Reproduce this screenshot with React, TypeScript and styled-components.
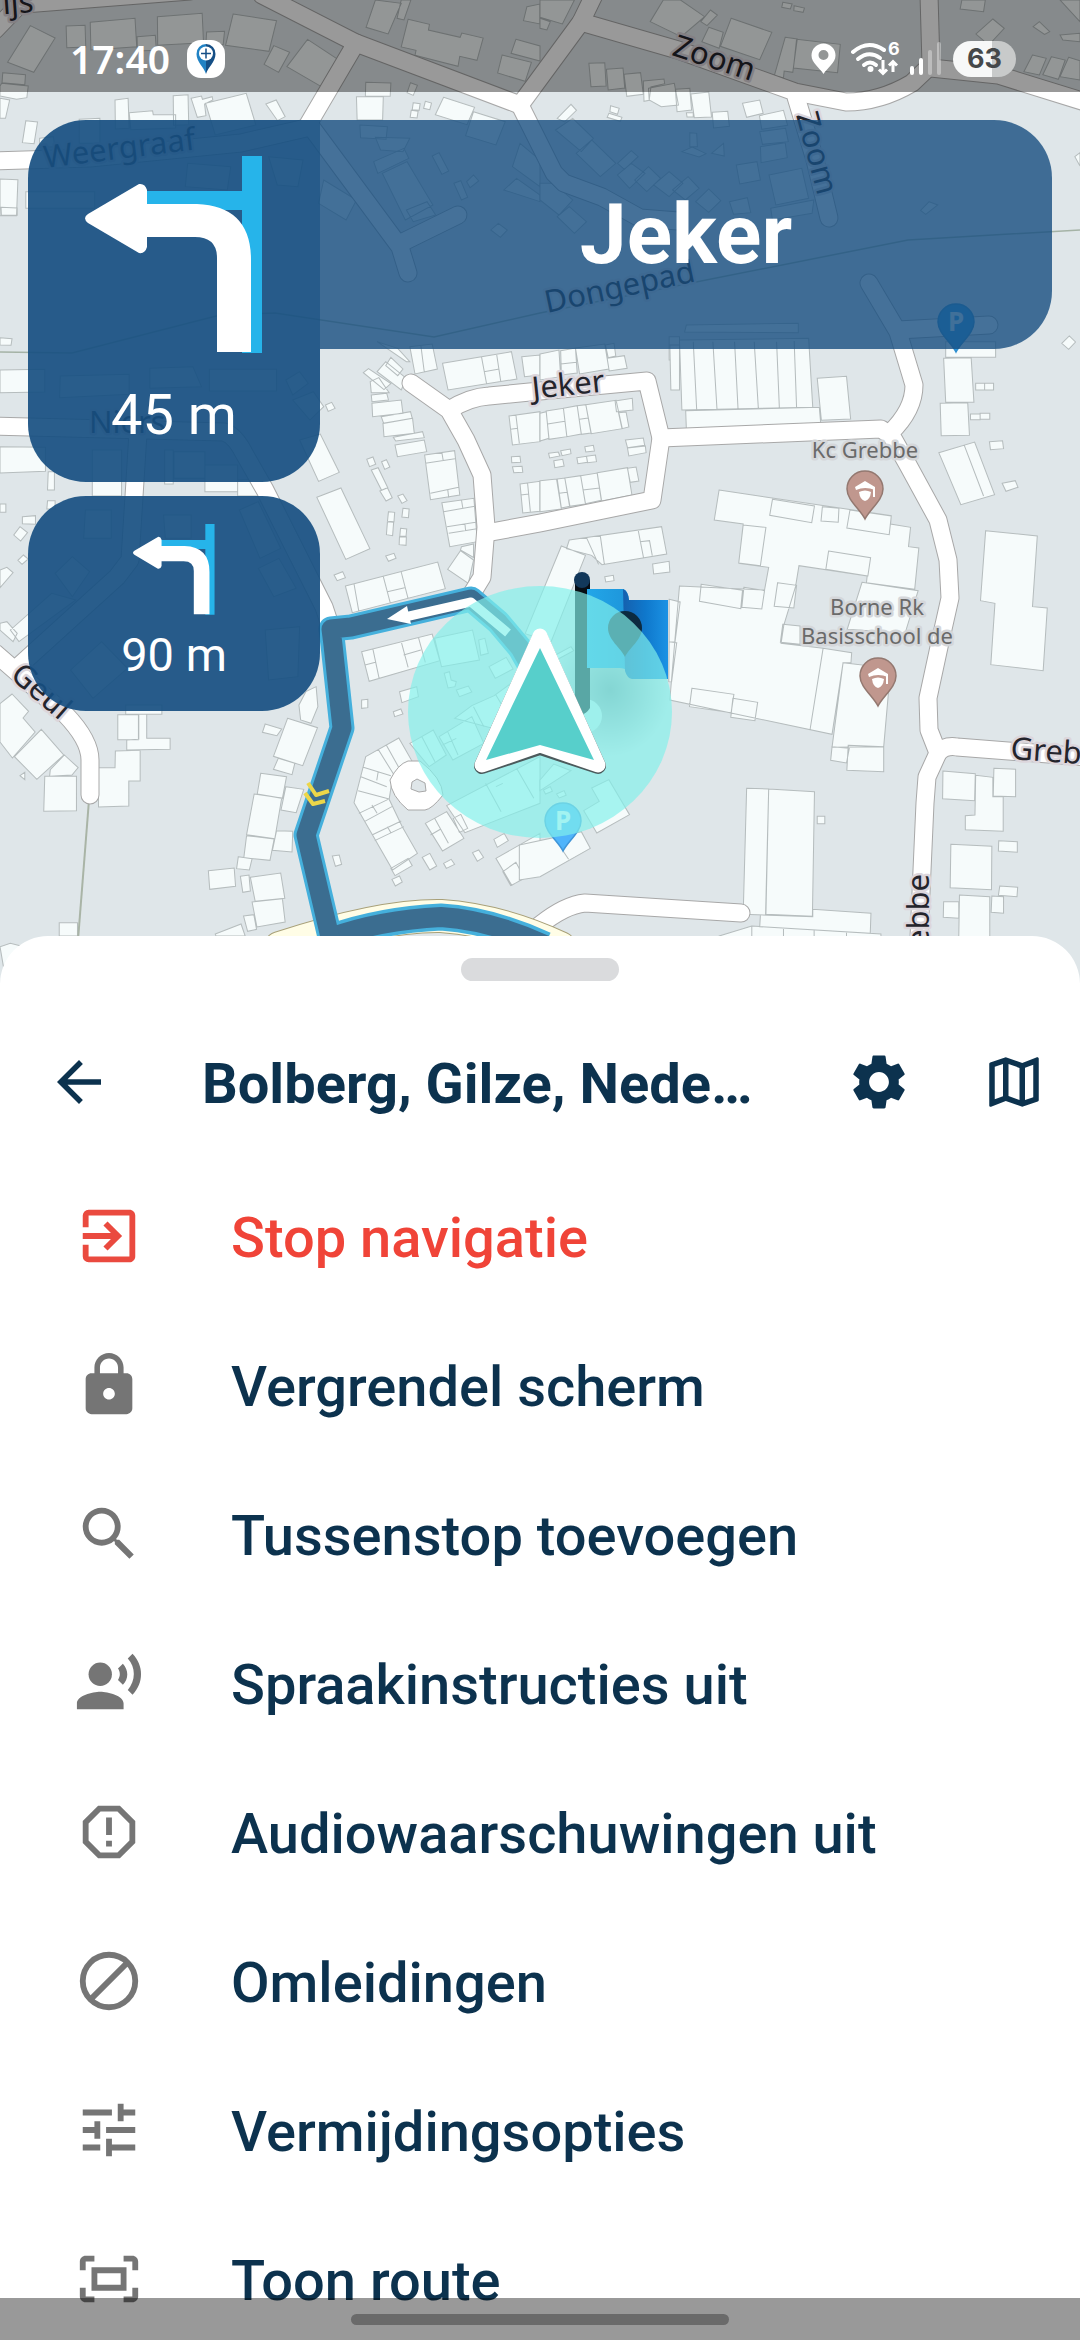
import React, {ReactNode} from 'react';
import styled, {createGlobalStyle} from 'styled-components';
import {
    MdArrowBack,
    MdExitToApp,
    MdLock,
    MdOutlineMap,
    MdRecordVoiceOver,
    MdReportGmailerrorred,
    MdSearch,
    MdSettings,
    MdTune
} from 'react-icons/md';

const GlobalStyle = createGlobalStyle`
    * { box-sizing: border-box; }
    body {
        margin: 0;
        background: #fff;
        font-family: Roboto, "Liberation Sans", sans-serif;
    }
    button {
        margin: 0;
        padding: 0;
        border: 0;
        background: none;
        font: inherit;
        color: inherit;
    }`;

const Screen = styled.div`
    position: relative;
    display: flex;
    flex-direction: column;
    height: 100vh;
    overflow: hidden;`;

const MapSvg = styled.svg`
    position: absolute;
    top: 0;
    left: 0;
    width: 100%;
    height: 42%;
    background: #dfe6e9;`;

const StatusBar = styled.header`
    position: relative;
    display: flex;
    align-items: center;
    justify-content: space-between;
    height: 92px;
    padding: 26px 64px 0 70px;
    background: rgba(0, 0, 0, 0.4);
    color: #fff;`;

const StatusGroup = styled.div<{ $gap: number }>`
    display: flex;
    align-items: center;
    gap: ${p => p.$gap}px;
    height: 40px;`;

const Clock = styled.span`
    font: 600 39px/40px "Noto Sans", sans-serif;`;

const Battery = styled.span`
    display: flex;
    align-items: center;
    justify-content: center;
    width: 63px;
    height: 36px;
    border-radius: 18px;
    background: linear-gradient(90deg, #f7f8f8 62%, #c8caca 62%);
    color: #45484a;
    font: 700 27px/36px Inter, sans-serif;`;

const Guidance = styled.main`
    position: relative;
    flex: 1;
    display: flex;
    align-items: flex-start;
    padding: 28px 28px 0;`;

const TurnColumn = styled.div`
    display: flex;
    flex-direction: column;
    gap: 14px;
    width: 292px;`;

const TurnCard = styled.section<{ $next?: boolean }>`
    display: flex;
    flex-direction: column;
    align-items: center;
    height: ${p => p.$next ? 215 : 362}px;
    padding-top: ${p => p.$next ? 28 : 36}px;
    gap: ${p => p.$next ? 12 : 26}px;
    border-radius: ${p => p.$next ? '58px' : '58px 0 58px 58px'};
    background: rgba(23, 79, 129, 0.92);
    color: #fff;
    font-size: ${p => p.$next ? 47 : 56}px;
    line-height: ${p => p.$next ? 56 : 72}px;`;

const TurnSvg = styled.svg<{ $width: number }>`
    display: block;
    width: ${p => p.$width}px;`;

const StreetBanner = styled.h1`
    flex: 1;
    margin: 0;
    border-radius: 0 58px 58px 0;
    background: rgba(22, 77, 127, 0.8);
    color: #fff;
    font-size: 84px;
    font-weight: 700;
    line-height: 229px;
    text-align: center;`;

const Sheet = styled.section`
    position: relative;
    flex: 0 0 60%;
    overflow: hidden;
    border-radius: 48px 48px 0 0;
    background: #fff;
    color: #0c324e;`;

const Grabber = styled.div`
    width: 158px;
    height: 23px;
    margin: 22px auto 27px;
    border-radius: 12px;
    background: #dadbdd;`;

const SheetHeader = styled.div`
    display: flex;
    align-items: center;
    height: 148px;
    padding: 0 33px 0 46px;`;

const IconButton = styled.button`
    display: flex;
    flex: none;
    font-size: 66px;

    & + & { margin-left: 69px; }`;

const Title = styled.h2`
    flex: 1;
    min-width: 0;
    margin: 0 60px 0 90px;
    padding-top: 4px;
    overflow: hidden;
    font-size: 56px;
    font-weight: 700;
    line-height: 72px;
    white-space: nowrap;
    text-overflow: ellipsis;`;

const Menu = styled.ul`
    margin: 0;
    padding: 5px 0 0;
    list-style: none;`;

const MenuButton = styled.button<{ $danger?: boolean }>`
    display: flex;
    align-items: center;
    gap: 87px;
    width: 100%;
    height: 149px;
    padding-left: 74px;
    color: ${p => p.$danger ? '#f04438' : '#0c324e'};
    text-align: left;

    svg {
        flex: none;
        width: 70px;
        height: 70px;
        color: ${p => p.$danger ? '#ea4a3f' : '#757575'};
    }`;

const MenuLabel = styled.span`
    padding-top: 4px;
    font-size: 56px;
    font-weight: 500;
    line-height: 66px;`;

const SystemNav = styled.div`
    position: absolute;
    right: 0;
    bottom: 0;
    left: 0;
    height: 42px;
    padding-top: 16px;
    background: rgba(0, 0, 0, 0.4);`;

const NavPill = styled.div`
    width: 35%;
    height: 11px;
    margin: 0 auto;
    border-radius: 6px;
    background: #6a6a6a;`;

// Building outlines, grouped in tiles that each have their own origin.
const TILES = [
    {
        x: 0, y: 0, d: `M88 77l72 37-62 103-76-30z M192 78l55-2 2 65-55 2z M262 67l130-12 5 85-133 10z M398 110l53-4 3 45-55 2z
        M457 50l130-10 4 88-133 8z M600 96l52-2-4 40-50-2z M677 42l126 20-22 92-126-18z M893 118l88 60-48 82-100-60z
        M795 137l46 20-32 60-42-24z M1090 0l75 10-38 92-64-20z M1165 0l28 0-20 60-20-5z
        M1185 58l62 15-3 17 92 22 5-13 62 15-18 67-50-12-5 30-125-33 3-15-43-10z M1498 118l70 20v45l-84-23z
        M1458 165l85 22-18 57-80-25z M1530 20l38-8v60l-48-10z M8 218l66 6-2 30-66-6z M5 250l77 8-4 35-30 5-48-10v-30z
        M0 295l28 5-12 55-16 0z M334 300l38-5 3 90-40 2z M503 287l43-3 2 90-44 2z M375 338l68-6 2 12 65 0v40l-130 5z
        M555 295l30-7 3 10 28-8 2 10-24 12 4 35-25 5z M597 310l118-30 28 95-118 30z M772 312l30-12 26 50-22 12z
        M75 362l34 4-10 65-34-3z M230 358l60-3v75h-60z M115 415l40-5 4 30-44 2z M1062 247l73 2-2 40-72-1z M1035 290l78 0-2 70-74 0z
        M1192 248l20 8-12 30-18-8z M1200 308l20 3-3 20-20-2z M1194 331l20 3-3 20-20-2z M1235 304l18 5-5 20-18-4z
        M1288 292l90 30-22 52-92-30z M1375 335l92 30-27 70-88-28z M1045 375l80 5-4 38-74-5z M1090 412l100 3-20 40-65-5z
        M1085 485l88-40 14 30-90 45z M1110 520l72-35 75 130-80 45z M1180 630l60-25 25 40-65 20z M1255 468l20-10 28 55-20 10z
        M1318 550l20-8 20 50-18 8z M1355 545l20-20 15 18-25 20z M1425 690l22-20 26 20-20 22z M0 537l52 2-4 108h-48z M3 622l47 2v22h-46z
        M75 575h200v50h-200z M545 490l125 10-10 70-122-10z M780 470l100 10-15 80-60-5z M940 540l95 60-30 60-80-50z
        M0 1013l35 3-3 20-32-1z M1510 430l58 50v80l-80-60z M1500 535l68 50v20l-105-35z`
    },
    {
        x: 540, y: 0, d: `M0 0h100l-35 72-65-20z M0 55l30 10-10 25-20-5z M358 0h50l70 50-68 60-90-45z M495 30l20 15-30 32-18-12z
        M490 82l42 15-12 48-50-20z M555 55l118 42-35 82-114-40z M705 7l27 5-5 15-25-5z M738 17l30 7-4 13-27-5z
        M712 112l35 5-13 100-25-4-2 20-27-5z M745 118l127 15-8 85-128-14z M142 190l46-2 4 70-44 2z M193 208l48-4 5 60-48 6z
        M244 223l48-5 8 65-48 6z M300 243l60-6 2 14-40 10-5 40-15 3z M315 265l75-15 12 65-50 5-35-20z M393 268l42-3 5 65-42 5z
        M438 282l52-6 8 75-50 2z M425 338l20 0v13h-18z M500 337l45-3 5 45-46 5z M588 310l50-10 10 40-48 12z
        M637 347l70-16 12 45-75 12z M638 395l75-10 8 40-75 8z M640 440l72-12 6 45-76 15z M205 317l25 8-5 18-22-8z
        M200 340l38 12-5 12-38-12z M50 355l40-42 16 18-35 35z M45 390l50-35 60 60-35 40z M105 460l45-40 70 70-45 40z
        M225 490l40-38 20 18-40 38z M225 525l40-35 40 30-45 45z M275 540l40-40 35 35-40 40z M330 555l45-40 40 35-40 40z
        M385 570l45-40 32 35-40 35z M452 605l38-38 35 35-35 35z M435 398l20 2 2 40-22 0z M412 455l30-14 40 20-20 10z M498 460l35-30 2 38z
        M570 495l60-10 10 55-60 12z M665 525l95-20 20 90-95 20z M550 605l52-12 10 45-50 5z M670 625l125-25-5 40-115 20z
        M0 550l40 0 55 50-40 45-55-45z M50 650l35-30 50 45-35 35z
        M1225 0h68l-5 35-68-8z M1315 57l33 28-45 50-37-33z M1432 80l18-15 30 30-15 8z M1510 105l58-5v25l-50-5z M1510 0h58v65z
        M1430 165l40 10-20 50-45-10z M1485 170l40 10-20 58-45-14z M1535 172l33 10v58l-58-10z M1553 470l15-12v40z
        M1130 605l25 10-35 28-15-12z M1515 1030l22-22 18 18-20 22z M425 975l325-5v28l-330-2z M375 1010h30v70h-30z`
    },
    {
        x: 0, y: 340, d: `M0 90l130-2v68l-130 2z M175 108l200-5v60l-202 10z M435 85l125-5 25 60-150 5z M608 88h195v65h-195z M830 120l40-25 25 35-45 35z
        M0 320l132 2v72l-132 5z M140 395h18v55h-20z M268 330h85v138h-85z M505 335h90v80h-90z M595 375h95v80h-95z
        M690 420l55-2 20 50h-75z M478 330h25v102h-25z M248 510h75v85h-80z M475 525h80v70h-75z M695 510l55-25 65 140-60 30z
        M750 685l60-30 50 90-65 25z M770 870l100-10-5 150-85 10z M0 492h17v25h-17z M138 482h22v25h-24z M65 530l38-3v26l-38-2z
        M58 560l22 18-20 25-20-18z M68 645l14 12-18 16-12-12z M0 690l20-8 18 16-38 45z M0 850l20-5 30 35-12 25-38-35z
        M30 870l120-110 70 20-165 125z M160 700l50-50 50 45-50 75z M205 990l90-85 75 80-100 90z M945 195l18-8 10 18-20 9z M870 300l60-18 55 115-60 27z
        M850 180l60-25 30 45-40 40z M920 472l70-28 84 182-70 32z M970 705l25-10 8 18-24 9z M1055 98l15-12 65 45-20 18z
        M1135 52l35 35-15 20-35-30z M1095 95l25-30 60 50-15 35z M1075 125l25-12 30 45-52 0z M1078 165l45-5 5 20-48 5z
        M1080 190l85-10 5 40-88 10z M1107 230l85-15 5 20-83 15z M1112 250l86-15 5 45-88 10z M1142 292l85-17 5 18-83 10z
        M1147 315l85-15 7 35-85 15z M1065 358l18-7 8 22-18 7z M1108 365l14-6 10 22-15 7z M1078 390l20-7 28 60-18 8z
        M1103 453l22-10 14 30-18 10z M1155 468l15-6 12 20-15 8z M1170 505l18 2-2 26-19-2z M1128 515l18 2-2 28-19-1z
        M1125 545l18 2-3 40-18-3z M1163 565l18 2-2 22-18-1z M1160 590l20 1-1 25-20-2z M1120 648l24-8 6 15-22 9z
        M1233 345l87-13 15 133-85 14z M1235 370l86-14 M1283 337l4 25 M1250 460l82-18 M1300 448l3 25 M1283 488l93-13 10 130-80 15z M1288 515l95-17 M1340 480l4 25 M1298 560l83-13 M1303 580l82-14 M1350 552l2 20
        M1337 632l38 28-15 70-60-42z M1340 620l35-8v40l-38-22z M1003 738l268-72 22 80-270 72z M1028 732l14 82 M1113 710l20 78
        M1165 696l20 80 M1125 755l50-12 M1285 70l200-35 16 82-200 33z M1398 50l15 82 M1442 42l12 82 M1405 95l45-8
        M1190 20l65-8 15 75-65 15z M1222 16l10 80 M1095 5l60 20 35 40-10 0z M1515 50l53-5v60l-45 5z M1478 228l90-13v90l-80 10z M1498 225l10 85 M1482 268l22-3
        M1485 350l25-1 2 18-26 1z M1488 380l28-1 2 18-26 1z M1510 432l58-8v90l-50 5z M1532 430l8 85 M1512 465l24-3
        M1050 935l205-53 22 80-205 62z M1083 928l18 88 M1060 975l30-8 M1165 905l20 77 M1172 945l50-15 M1215 892l20 75 M1050 1080l18-2v25l-18 2z
        M1160 1055l50-15 5 30-48 18z M1142 1115l22-8 6 15-24 8z M1262 895l110-25 20 90-110 20z M1390 900l18-5 10 45-22 6z
        M1420 980l50-28 20 35-52 28z M1290 1000l15-5 5 25 15 5-4 15-20 4z`
    },
    {
        x: 540, y: 340, d: `M0 42l55-12 5 80-60 10z M60 32l43-8 5 75-46 6z M60 72l46-5 M103 24l85-12 12 75-85 15z M195 55l50-8 8 38-52 8z M190 15l25-5 5 38-22 5z
        M0 220l18-5 8 80-26 8z M18 213l50-8 10 85-52 8z M22 252l50-8 M68 205l40-8 12 85-42 8z M108 197l25-3 15 85-28 4z M115 238l25-4 M133 194l88-13 18 85-90 15z
        M218 183l50-8 2 35-48 5z M228 218l22-2 8 45-20 5z M25 340l28-4 5 12-30 6z M60 332l28-5 2 14-26 6z M40 362l26-4 4 20-27 5z
        M107 353l28-4 3 18-28 4z M135 349l26-4 3 20-26 3z M130 320l25-4 3 17-25 3z M248 300l52-6 4 22-50 7z M254 324l52-6 2 20-50 10z
        M0 422l48-5 14 90-62 8z M50 417l22-3 15 85-25 5z M56 460l22-3 M72 414l46-7 14 85-46 7z M118 407l48-8 12 82-46 10z M124 450l50-6 M166 398l88-15 13 82-88 18z
        M254 385l25-4 8 42-25 4z M85 600l268-40 15 82-188 32-30-28-73-20z M135 593l35 80 M175 587l12 86 M285 570l16 85 M290 605l28-3 8 45
        M327 672l48-8 2 32-47 6z M188 710l25-4 2 16-24 4z M62 618l70 28-100 260-75-25z M45 945l45-25 8 12-45 25z
        M377 15l28 0v135l-25 0z M405 0l375-5 12 207-380 8z M445 5l10 205 M502 5l12 204 M565 5l10 201 M622 5l12 200 M687 5l8 198 M738 3l7 199
        M423 212l388-10 4 48-390 18z M805 115l85-6 12 128-85 4z M1178 5h145v47h-145z M1172 55l80-2 8 134-82 0z M1162 190l80-2 5 98-82 1z
        M1265 130h26v20h-26z M1291 130h26v20h-26z M1250 222h28v17h-28z M1278 220h28v18h-28z M1158 338l104-32 58 158-98 30z M1232 316l56 152
        M1305 305l38-3 3 24-38 3z M1342 430l38-8 8 20-35 12z
        M520 450L1020 527 1018 552 1076 562 1070 620 1100 624 1088 748 948 728 950 708 752 677 742 740 708 855 700 910 822 925 905 938 903 968 880 968 848 1183 377 1080 405 738 652 750 664 682 577 670 590 552 506 540z
        M675 478l122 20-8 50-122-22z M820 500l48 5-2 42-50-4z M900 510l120 18-6 56-123-20z M838 633l122 20-8 55-122-20z
        M590 555l66 7-16 115-63-8z M468 733l120 18-5 55-120-22z M592 742l60 10-8 55-58-5z M690 728l55 8-8 68-57-5z
        M935 727l163 25-38 128-168-12z M705 853l50 5v55l-57-6z M375 778l32 8-15 120-17 0z M375 905l22 3-15 118-8-1z
        M441 1045l122 18-8 55-121-18z M560 1075l72 12-8 55-70-10z M822 925l-38 245 M880 968L1018 985 998 1220 848 1222z
        M848 1220l50 5-8 44-46-8z M895 1216l103 4v75l-107-4z M1294 572l150 16-14 212 43 4-12 188-152-18 12-184-42-8z`
    },
    {
        x: 0, y: 640, d: `M35 162l48 52-16 20 35 42-66 78-36-48v-115z M120 268l65 77-78 73-65-68z M187 345l40 38-18 22-65 4 2-20z
        M130 409h92v103l-95 2z M58 407l14-10v22z M342 224h60v75h-60z M365 195h105v28h-105z M403 223h23v72h68v33l-126 2v-30l35-2z
        M335 333l72-2v92h-33v75l-88 3v-118h48z M172 848h53v40h-53z M0 920l30-10 40 10-60 60z M770 252l48 15-14 20-42-10z M868 195l20-40 30-15 5 60-20 50-30-10z
        M835 235l87 28-43 114-85-28z M808 355l48 15-8 34-54-16z M757 400l75 10-12 65-73-13z M738 462l80 12-20 122-82-12z
        M716 587l80 10-12 64-76-8z M692 650l40 6-8 34-37-4z M830 440l52 8-22 70-44-8z M803 572l47 2-2 62-57-5z
        M605 692l75-8 4 55-75 9z M698 709l25-4 4 48-22 4z M727 712l88-13 12 76-86 9z M732 786l88-10 8 70-82 15z
        M707 828l30-4 8 44-26 6z M625 882l75-30 12 36h-85z
        M1062 350L1158 294 1200 370 1165 380 1140 410 1130 478 1168 560 1212 640 1140 690 1040 510 1028 488z
        M1098 328l45 75 M1122 316l38 70 M1055 382l80 25 M1098 396l-4 25 M1048 410l75 30 M1040 452l90 25 M1042 520l85-42 M1080 495l15 25 M1058 545l80-45 M1080 585l85-42 M1125 560l10 18 M1088 602l85-42
        M1135 685l50-30 12 22-50 30z M1138 718l22-10 8 18-20 12z M965 648l20-3 7 28-18 6z M1226 652l22-12 20 38-20 12z
        M1288 670l22-12 10 15-24 12z M1372 638l18-8 14 22-18 12z M1434 598l30-18 12 22-32 20z M1235 550l62-35 50 80-62 38z
        M1262 535l40 75 M1250 585l30-18 M1316 535l22-12 20 42-24 12z M1440 655l128-75v120l-20-2-62 38z M1460 695l38-28 25 48-40 22z M1297 497L1568 350v140L1350 578z
        M1410 430l45 85 M1440 440l20-10 M1500 385l50 90 M1190 310l68-40 38 75-50 35z M1225 290l38 75 M1275 290l95-60 35 80-90 50z M1300 275l30 70 M1285 315l40-20 M1325 150l35-12 10 18-36 14z
        M1320 235l50-38 65-30 133-100 0 120-130 80z M1375 200l30 60 M1440 165l40 70`
    },
    {
        x: 540, y: 640, d: `M600 445l64 2-8 378-66-2z M664 447l133 8-6 374-136-6z M640 825l152 5v-22l169 12-2 60-321-20z M805 529h22v22h-22z
        M520 888l95-30 375 24v30h-470z M615 858v40 M707 864v40 M796 870v30 M890 876v30 M1170 393l94 8-2 81-93-6z
        M1265 406l50 6v58h30v104l-110-5v-42l28-2z M1318 385l63 3v82l-65-2z M1193 613l119 6-1 130-120-6z M1332 602l54 3v32l-55-4z
        M1335 738l52 4-2 28-54-4z M1218 765l88 5v120h-90z M1312 768l34 2v50l-36-3z M1172 785h44v50l-45-3z
        M-60 615l180-40 26 50-146 85-60 10z M65 630l18 28 M127 512l45-28-22-40 50-25 60 105-95 55z
        M0 420l40-48 50 20-90 60z M10 450l20-10 6 14-20 8z M48 462l22-10 6 14-20 8z`
    }
];

const ROADS = [
    'M411 383L449 410 466 440 482 475 486 527 482 577 468 600',
    'M449 410Q470 397 489 396L540 391 647 381 661 438 652 500 540 523 486 533',
    'M661 438L881 429 890 435',
    'M869 283L898 332 914 385Q914 410 890 433L908 465 938 520 948 560 950 598 939 647 928 698 929 730 938 753 927 777 925 803 918 960',
    'M898 330L989 325',
    'M938 753Q945 745 957 747L1100 758',
    'M741 913L585 903Q565 905 540 925L520 945',
    'M-5 653L65 714Q90 740 90 760L90 795',
    'M-5 161L90 158 241 143 306 128 356 43 262 -5',
    'M356 43L520 105 581 22 594 -5',
    'M520 105L554 173 564 183 602 197 640 218 678 221',
    'M581 22L678 50 795 92 846 102Q880 102 912 83L931 65 929 -5',
    'M931 68L998 75 1085 102',
    'M796 97L815 160 829 218',
    'M312 128L400 247 408 273',
    'M401 243L458 215',
    'M-5 426L224 432Q235 435 245 455L265 490 324 607 331 628',
    'M138 433L130 560 117 577 20 665',
    'M-5 30L24 0',
    'M24 4L190 -9'
];

const MAIN_ROAD = 'M280 948Q380 915 441 916 500 920 560 948';
const ROUTE = 'M545 692L520 648 498 622 471 599 351 627 331 629 333 645 342 728 306 835 333 950';
const ROUTE_END = 'M330 938Q380 920 441 917 490 920 545 945';

interface MapLabelProps {
    x: number;
    y: number;
    angle?: number;
    anchor?: 'start' | 'middle' | 'end';
    poi?: boolean;
    children: string;
}

function MapLabel({x, y, angle = 0, anchor = 'start', poi, children}: MapLabelProps) {
    return (
        <text transform={`translate(${x} ${y}) rotate(${angle})`}
              fontFamily='"Noto Sans", sans-serif'
              fontSize={poi ? 22 : 31}
              fill={poi ? '#6a6a6a' : '#24242c'}
              stroke={poi ? '#d5d7da' : '#dcd6dc'}
              strokeWidth='5'
              strokeLinejoin='round'
              paintOrder='stroke'
              textAnchor={anchor}>{children}</text>
    );
}

interface PinProps {
    x: number;
    y: number;
    fill: string;
    stroke: string;
    children: ReactNode;
}

// x, y is the tip of the pin
function Pin({x, y, fill, stroke, children}: PinProps) {
    return (
        <g transform={`translate(${x} ${y})`}>
            <path d='M0 0C-5 -10 -18 -19 -18 -30A18 18 0 0 1 18 -30C18 -19 5 -10 0 0Z' fill={fill} stroke={stroke} strokeWidth='1.5' />
            {children}
        </g>
    );
}

const SchoolGlyph = () => (
    <g fill='#fff'>
        <path d='M-10 -32L0 -38 10 -32V-29Q0 -33 -9 -29Z' />
        <path d='M-6 -27Q0 -30 6 -27Q5 -19 0 -18Q-5 -19 -6 -27Z' />
        <path d='M8 -31H10V-22H8Z' />
    </g>
);

const ParkingGlyph = () => (
    <text y='-21' textAnchor='middle' fontFamily='"Noto Sans", sans-serif' fontSize='26' fontWeight='700' fill='#e6f8ff'>P</text>
);

function MapCanvas() {
    return (
        <MapSvg viewBox='0 0 1080 983' preserveAspectRatio='xMidYMin slice' aria-label='Kaart'>
            <defs>
                <linearGradient id='flagFold'>
                    <stop offset='0' stopColor='#1560ae' />
                    <stop offset='0.5' stopColor='#0f78cc' />
                    <stop offset='1' stopColor='#1b92e4' />
                </linearGradient>
                <linearGradient id='flagFront'>
                    <stop offset='0' stopColor='#22a6e8' />
                    <stop offset='1' stopColor='#1e95da' />
                </linearGradient>
                <radialGradient id='flagShade'>
                    <stop offset='0' stopColor='#33555c' stopOpacity='0.5' />
                    <stop offset='1' stopColor='#33555c' stopOpacity='0' />
                </radialGradient>
            </defs>

            {TILES.map(tile => (
                <g key={`${tile.x}-${tile.y}`} transform={`translate(${tile.x} ${tile.y}) scale(0.34439 0.33333)`}>
                    <path d={tile.d} fill='#f6fbfb' stroke='#b6bdbe' strokeWidth='3' />
                </g>
            ))}

            <path d='M0 352L72 353 220 315 275 313 434 337 540 313 908 240 1080 230' fill='none' stroke='#a5b3a6' strokeWidth='1.5' />
            <path d='M89 800L78 940' fill='none' stroke='#a9b4a6' strokeWidth='2' />

            <g fill='none' strokeLinecap='round' strokeLinejoin='round'>
                {ROADS.map(d => <path key={d} d={d} stroke='#a8a8a8' strokeWidth='19' />)}
                {ROADS.map(d => <path key={d} d={d} stroke='#fff' strokeWidth='17' />)}
                <path d={MAIN_ROAD} stroke='#a8a078' strokeWidth='34' />
                <path d={MAIN_ROAD} stroke='#fffde6' strokeWidth='32' />
            </g>
            <path d='M408 761H420Q442 778 443 795Q432 809 425 810H408Q391 796 390 780Q398 764 408 761Z' fill='#fff' stroke='#a8a8a8' />
            <path d='M417 779L425 783 426 791 419 792 411 789 412 782Z' fill='#dfe6e9' stroke='#a8a8a8' />

            <g fill='none' strokeLinejoin='round'>
                <path d={ROUTE_END} stroke='#45b0dc' strokeWidth='27' />
                <path d={ROUTE} stroke='#45b0dc' strokeWidth='25' />
                <path d={ROUTE_END} stroke='#3b6d90' strokeWidth='20' />
                <path d={ROUTE} stroke='#3b6d90' strokeWidth='19' />
                <path d='M405 617L471 602 508 633' stroke='#fff' strokeWidth='9' />
                <path d='M308 783L316 795 329 791M305 793L313 804 325 801' stroke='#ecd649' strokeWidth='4' />
            </g>
            <path d='M387 619L407 606 411 624Z' fill='#fff' />

            <MapLabel x={34} y={12} angle={-4} anchor='end'>ijs</MapLabel>
            <MapLabel x={45} y={168} angle={-7}>Weergraaf</MapLabel>
            <MapLabel x={671} y={55} angle={18}>Zoom</MapLabel>
            <MapLabel x={796} y={115} angle={75}>Zoom</MapLabel>
            <MapLabel x={547} y={313} angle={-12}>Dongepad</MapLabel>
            <MapLabel x={533} y={399} angle={-6}>Jeker</MapLabel>
            <MapLabel x={89} y={433}>Niers</MapLabel>
            <MapLabel x={9} y={677} angle={41}>Geul</MapLabel>
            <MapLabel x={1010} y={759} angle={4}>Grebbe</MapLabel>
            <MapLabel x={929} y={874} angle={-90} anchor='end'>Grebbe</MapLabel>
            <MapLabel x={865} y={458} anchor='middle' poi>Kc Grebbe</MapLabel>
            <MapLabel x={877} y={615} anchor='middle' poi>Borne Rk</MapLabel>
            <MapLabel x={877} y={644} anchor='middle' poi>Basisschool de</MapLabel>

            <Pin x={865} y={519} fill='#c0978e' stroke='#937870'><SchoolGlyph /></Pin>
            <Pin x={878} y={706} fill='#c0978e' stroke='#937870'><SchoolGlyph /></Pin>
            <Pin x={956} y={352} fill='#2fa0e8' stroke='#2e8fd0'><ParkingGlyph /></Pin>
            <Pin x={563} y={851} fill='#4fb4fb' stroke='#3f95d8'><ParkingGlyph /></Pin>

            <ellipse cx='610' cy='690' rx='60' ry='66' fill='url(#flagShade)' />
            <circle cx='585' cy='716' r='17' fill='#d9eeee' />
            <path d='M575 580V708Q582 720 590 708V580Z' fill='#060d14' />
            <circle cx='582' cy='580' r='8' fill='#12385a' />
            <path d='M587 589H623Q628 590 629 600V674Q627 668 620 668H587Z' fill='url(#flagFront)' />
            <path d='M623 589Q628 591 629 600H668V679H632Q627 678 625 671Z' fill='url(#flagFold)' />
            <path d='M625 657C621 648 608 640 608 628A17 17 0 0 1 642 628C642 640 629 648 625 657Z' fill='#0c2a40' />

            <ellipse cx='540' cy='712' rx='132' ry='126' fill='#81f0eb' fillOpacity='0.68' />
            <g strokeLinejoin='round'>
                <path d='M540 637L598 765 540 746 482 765Z' transform='translate(0 1)' fill='#4c5a5c' stroke='#4c5a5c' strokeWidth='16' />
                <path d='M540 636L598 765 540 745 482 765Z' fill='#84ece4' stroke='#fff' strokeWidth='15' />
                <path d='M540 648L594 760 540 745 486 760Z' fill='#57cfcb' />
            </g>
        </MapSvg>
    );
}

const TurnLeftArrow = ({width}: { width: number }) => (
    <TurnSvg $width={width} viewBox='0 0 178 197' aria-label='Linksaf'>
        <path d='M60 35H157V0H177V197H157V54H60Z' fill='#26b4ea' />
        <path d='M132 196V102Q132 81 110 81H62V91Q60 98 54 97L3 67Q-3 62 3 58L54 28Q60 27 62 34V48H112Q166 50 166 104V196Z' fill='#fff' />
    </TurnSvg>
);

const BlockedIcon = () => (
    <svg viewBox='0 0 24 24' fill='none' stroke='currentColor' strokeWidth='2'>
        <circle cx='12' cy='12' r='9' />
        <path d='M5.7 18.3L18.3 5.7' />
    </svg>
);

const FitRouteIcon = () => (
    <svg viewBox='0 0 24 24' fill='currentColor'>
        <path d='M17 4h3c1.1 0 2 .9 2 2v3h-2V6h-3V4zM4 9V6h3V4H4c-1.1 0-2 .9-2 2v3h2zm16 6v3h-3v2h3c1.1 0 2-.9 2-2v-3h-2zM7 18H4v-3H2v3c0 1.1.9 2 2 2h3v-2z' />
        <path fillRule='evenodd' d='M18 8H6v8h12V8zm-2 6H8v-4h8v4z' />
    </svg>
);

const StatusIcons = () => (
    <svg width='131' height='36' viewBox='811 41 131 36' fill='#fff' aria-hidden='true'>
        <path fillRule='evenodd' d='M823.5 74C820 68 811.5 63 811.5 55.5A12 12 0 0 1 835.5 55.5C835.5 63 827 68 823.5 74ZM823.5 50A5 5 0 1 0 823.5 60A5 5 0 1 0 823.5 50Z' />
        <g fill='none' stroke='#fff' strokeWidth='4' strokeLinecap='round'>
            <path d='M853 52Q868 39 884 50' />
            <path d='M858 59Q869 50 880 58' />
            <path d='M864 65Q870 60 876 65' />
        </g>
        <circle cx='870.5' cy='69' r='3' />
        <path d='M883 60V73M879 69.5L883 73.5 887 69.5M893 72V62M889 65.5L893 61.5 897 65.5' fill='none' stroke='#fff' strokeWidth='3' />
        <text x='888' y='55' fontFamily='Inter, sans-serif' fontSize='18' fontWeight='700'>6</text>
        <rect x='910' y='66' width='4' height='9' rx='2' />
        <rect x='919' y='58' width='4' height='17' rx='2' />
        <rect x='928' y='50' width='4' height='25' rx='2' opacity='0.35' />
        <rect x='937' y='42' width='4' height='33' rx='2' opacity='0.35' />
    </svg>
);

const AppBadge = () => (
    <svg width='38' height='38' viewBox='0 0 38 38' aria-hidden='true'>
        <rect width='38' height='38' rx='14' fill='#fff' />
        <path d='M19 34C17 27 9.5 22 9.5 14A9.5 9.5 0 0 1 19 4Z' fill='#2182c4' />
        <path d='M19 34C21 27 28.5 22 28.5 14A9.5 9.5 0 0 0 19 4Z' fill='#154f86' />
        <circle cx='19' cy='13.5' r='7' fill='#fff' />
        <path d='M19 8.5V18.5M14 13.5H24' stroke='#154f86' strokeWidth='1.5' />
    </svg>
);

interface MenuItem {
    label: string;
    icon: ReactNode;
    danger?: boolean;
}

const MENU_ITEMS: MenuItem[] = [
    { label: 'Stop navigatie', icon: <MdExitToApp />, danger: true },
    { label: 'Vergrendel scherm', icon: <MdLock /> },
    { label: 'Tussenstop toevoegen', icon: <MdSearch /> },
    { label: 'Spraakinstructies uit', icon: <MdRecordVoiceOver /> },
    { label: 'Audiowaarschuwingen uit', icon: <MdReportGmailerrorred /> },
    { label: 'Omleidingen', icon: <BlockedIcon /> },
    { label: 'Vermijdingsopties', icon: <MdTune /> },
    { label: 'Toon route', icon: <FitRouteIcon /> }
];

function App() {
    return (
        <Screen>
            <GlobalStyle />
            <MapCanvas />

            <StatusBar>
                <StatusGroup $gap={17}>
                    <Clock>17:40</Clock>
                    <AppBadge />
                </StatusGroup>
                <StatusGroup $gap={11}>
                    <StatusIcons />
                    <Battery>63</Battery>
                </StatusGroup>
            </StatusBar>

            <Guidance>
                <TurnColumn>
                    <TurnCard>
                        <TurnLeftArrow width={178} />
                        <span>45 m</span>
                    </TurnCard>
                    <TurnCard $next>
                        <TurnLeftArrow width={82} />
                        <span>90 m</span>
                    </TurnCard>
                </TurnColumn>
                <StreetBanner>Jeker</StreetBanner>
            </Guidance>

            <Sheet>
                <Grabber />
                <SheetHeader>
                    <IconButton type='button' aria-label='Terug'><MdArrowBack /></IconButton>
                    <Title>Bolberg, Gilze, Nede…</Title>
                    <IconButton type='button' aria-label='Instellingen'><MdSettings /></IconButton>
                    <IconButton type='button' aria-label='Kaart'><MdOutlineMap /></IconButton>
                </SheetHeader>
                <Menu>
                    {MENU_ITEMS.map(item => (
                        <li key={item.label}>
                            <MenuButton type='button' $danger={item.danger}>
                                {item.icon}
                                <MenuLabel>{item.label}</MenuLabel>
                            </MenuButton>
                        </li>
                    ))}
                </Menu>
            </Sheet>

            <SystemNav><NavPill /></SystemNav>
        </Screen>
    );
}

export default App;
